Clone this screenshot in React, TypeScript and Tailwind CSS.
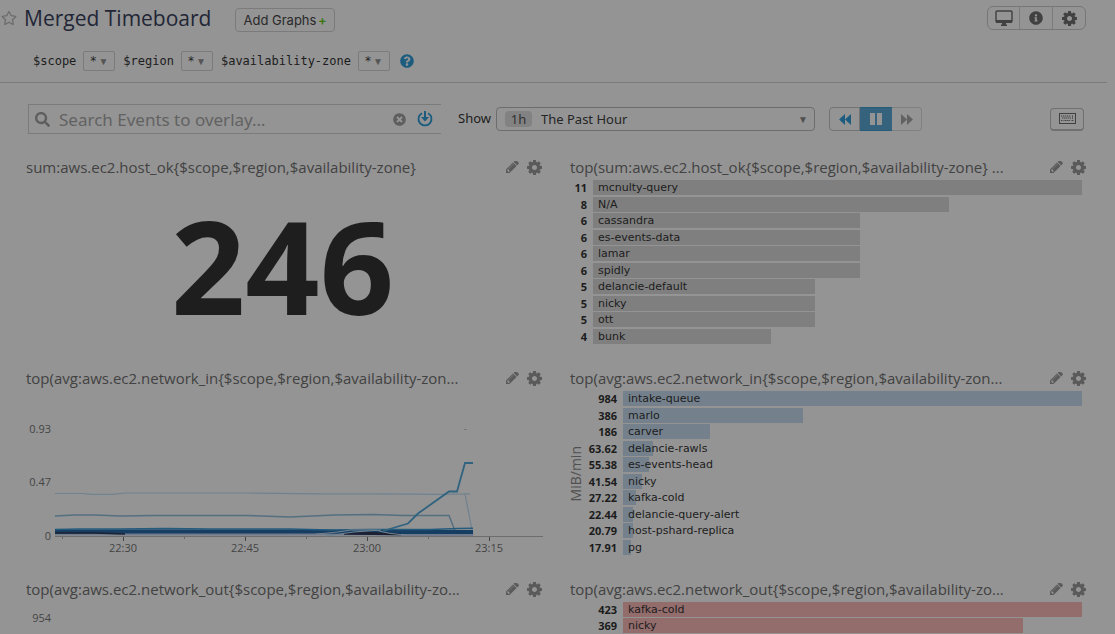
import type { ReactNode } from "react";
import { FaInfoCircle, FaQuestionCircle, FaRegStar, FaSearch, FaTimesCircle } from "react-icons/fa";

function CogIcon({ className }: { className: string }) {
  return (
    <svg viewBox="128 128 1536 1536" className={className} fill="currentColor" aria-hidden="true">
      <path d="M1152 896q0-106-75-181t-181-75-181 75-75 181 75 181 181 75 181-75 75-181zm512-109v222q0 12-8 23t-20 13l-185 28q-19 54-39 91 35 50 107 138 10 12 10 25t-9 23q-27 37-99 108t-94 71q-12 0-26-9l-138-108q-44 23-91 38-16 136-29 186-7 28-36 28h-222q-14 0-24.5-8.5t-11.5-21.5l-28-184q-49-16-90-37l-141 107q-10 9-25 9-14 0-25-11-126-114-165-168-7-10-7-23 0-12 8-23 15-21 51-66.5t54-70.5q-27-50-41-99l-183-27q-13-2-21-12.5t-8-23.5v-222q0-12 8-23t19-13l186-28q14-46 39-92-40-57-107-138-10-12-10-24 0-10 9-23 26-36 98.5-107.5t94.5-71.5q13 0 26 10l138 107q44-23 91-38 16-136 29-186 7-28 36-28h222q14 0 24.5 8.5t11.5 21.5l28 184q49 16 90 37l142-107q9-9 24-9 13 0 25 10 129 119 165 170 7 8 7 22 0 12-8 23-15 21-51 66.5t-54 70.5q26 50 41 98l183 28q13 2 21 12.5t8 23.5z" />
    </svg>
  );
}

function PencilIcon({ className }: { className: string }) {
  return (
    <svg viewBox="128 256 1536 1408" className={className} fill="currentColor" aria-hidden="true">
      <path d="M491 1536l91-91-235-235-91 91v107h128v128h107zm523-928q0-22-22-22-10 0-17 7l-542 542q-7 7-7 17 0 22 22 22 10 0 17-7l542-542q7-7 7-17zm-54-192l416 416-832 832h-416v-416zm683 96q0 53-37 90l-166 166-416-416 166-165q36-38 90-38 53 0 91 38l235 234q37 39 37 91z" />
    </svg>
  );
}

function MonitorIcon() {
  return (
    <svg viewBox="0 0 18 16" className="h-4 w-[18px]" aria-hidden="true">
      <rect x="1" y="1" width="16" height="11" rx="1" fill="none" stroke="currentColor" strokeWidth="1.4" />
      <path d="M1 10h16v3H1zM7 13h4v1.500h1V16H6v-1.500h1z" fill="currentColor" />
    </svg>
  );
}

function KeyboardIcon() {
  return (
    <svg viewBox="0 0 17 11" className="h-[11px] w-[17px]" aria-hidden="true">
      <rect x="0.500" y="0.500" width="16" height="10" fill="none" stroke="currentColor" />
      <path d="M2 3h10M13.500 2.500v3.500M3 5h9M2 7.500h2.500M5.500 7.500h6M12.500 7.500H15" stroke="currentColor" strokeWidth="1" strokeDasharray="1.400 0.600" fill="none" />
    </svg>
  );
}

function SkipIcon({ flip = false }: { flip?: boolean }) {
  return (
    <svg viewBox="0 0 12 11" className={flip ? "h-[11px] w-3 rotate-180" : "h-[11px] w-3"} fill="currentColor" aria-hidden="true">
      <path d="M0 0l6 5.500L0 11zM6 0l6 5.500L6 11z" />
    </svg>
  );
}

function OverlayIcon() {
  return (
    <svg viewBox="0 0 16 16" className="size-4" aria-hidden="true">
      <path d="M5 2.200A6.500 6.500 0 1 0 11 2.200" fill="none" stroke="currentColor" strokeWidth="1.800" />
      <path d="M7 0h2v6h3l-4 4.500L4 6h3z" fill="currentColor" />
    </svg>
  );
}

function Variable({ name }: { name: string }) {
  return (
    <div className="flex items-center gap-[7px]">
      <label htmlFor={name} className="font-['DejaVu_Sans_Mono',monospace] text-xs text-[#1c1c1c]">
        {name}
      </label>
      <div className="relative">
        <select
          id={name}
          className="block h-5 w-8 appearance-none rounded-xs border border-[#7b7b7b] pl-1.5 font-['DejaVu_Sans',sans-serif] text-xs leading-4 text-[#252525]"
        >
          <option>*</option>
        </select>
        <span aria-hidden="true" className="pointer-events-none absolute top-0.5 right-[7px] text-[10px] leading-4 text-[#555]">
          ▼
        </span>
      </div>
    </div>
  );
}

function Panel({ title, children }: { title: string; children: ReactNode }) {
  return (
    <section className="min-w-0">
      <header className="flex h-[25px] items-start justify-between">
        <h2 className="truncate text-[15px] leading-6 text-[#424242]">{title}</h2>
        <div className="flex h-6 items-center gap-2 pr-px text-[#5a5a5a]">
          <button aria-label="Edit graph">
            <PencilIcon className="h-3 w-[13px]" />
          </button>
          <button aria-label="Graph settings">
            <CogIcon className="size-[15px]" />
          </button>
        </div>
      </header>
      {children}
    </section>
  );
}

type Entry = [value: number, label: string];

const hosts: Entry[] = [
  [11, "mcnulty-query"],
  [8, "N/A"],
  [6, "cassandra"],
  [6, "es-events-data"],
  [6, "lamar"],
  [6, "spidly"],
  [5, "delancie-default"],
  [5, "nicky"],
  [5, "ott"],
  [4, "bunk"],
];

const networkIn: Entry[] = [
  [984, "intake-queue"],
  [386, "marlo"],
  [186, "carver"],
  [63.62, "delancie-rawls"],
  [55.38, "es-events-head"],
  [41.54, "nicky"],
  [27.22, "kafka-cold"],
  [22.44, "delancie-query-alert"],
  [20.79, "host-pshard-replica"],
  [17.91, "pg"],
];

const networkOut: Entry[] = [
  [423, "kafka-cold"],
  [369, "nicky"],
];

function TopList({ entries, color, unit }: { entries: Entry[]; color: string; unit?: string }) {
  const max = entries[0][0];
  const wide = max > 99;
  return (
    <div className="flex pr-[5px]">
      {wide && (
        <div className="flex w-3 shrink-0 items-center justify-center">
          {unit && <span className="rotate-180 text-sm leading-3 text-[#505050] [writing-mode:vertical-rl]">{unit}</span>}
        </div>
      )}
      <ol className={entries.length > 2 ? "flex h-[165px] min-w-0 grow flex-col" : "flex h-8 min-w-0 grow flex-col"}>
        {entries.map(([value, label], i) => (
          <li key={i} className="flex min-h-0 flex-1 items-start gap-1.5">
            <span className={wide ? "w-[35px] shrink-0 text-right text-[11px] leading-[15px] font-bold text-[#1c1c1c]" : "w-[17px] shrink-0 text-right text-[11px] leading-[15px] font-bold text-[#1c1c1c]"}>
              {value}
            </span>
            <div className="min-w-0 grow">
              <div className={`h-[15px] ${color}`} style={{ width: `${(value / max) * 100}%` }}>
                <span className="block pl-[5px] font-['DejaVu_Sans',sans-serif] text-[11px] leading-[15px] whitespace-nowrap text-[#1c1c1c]">{label}</span>
              </div>
            </div>
          </li>
        ))}
      </ol>
    </div>
  );
}

const ticks = [
  { x: 97, label: "22:30" },
  { x: 219, label: "22:45" },
  { x: 341, label: "23:00" },
  { x: 463, label: "23:15" },
];

function NetworkChart() {
  return (
    <svg viewBox="0 0 517 165" className="block w-full" fill="none" role="img" aria-label="Network in">
      <g fill="#444" fontSize="11" className="font-['Open_Sans',sans-serif]">
        <text x="25" y="42" textAnchor="end">0.93</text>
        <text x="25" y="95" textAnchor="end">0.47</text>
        <text x="25" y="149" textAnchor="end">0</text>
        {ticks.map((t) => (
          <text key={t.label} x={t.x} y="161" textAnchor="middle">{t.label}</text>
        ))}
      </g>
      <path d="M29 145.500H517" stroke="#6d6d6d" />
      <path d="M97.500 146v4M219.500 146v4M341.500 146v4M463.500 146v4" stroke="#444" />
      <path d="M36.500 146v2M158.500 146v2M280.500 146v2M402.500 146v2" stroke="#666" />
      <path d="M438 38.500h3" stroke="#777" />
      <path d="M29 102.500h27l10 .8h20l14-1.300h120l74 .8h60l60 .5 30-.5H439L447 144" stroke="#708290" strokeWidth="1.200" />
      <path d="M29 125l20-1h20l25 1 35-.5h90l45 1.500 45-2 38-.5 30 1h45H423l7 18" stroke="#547080" strokeWidth="1.500" />
      <path d="M29 143h330l20 .500h68" stroke="#717b8b" strokeWidth="3" />
      <path d="M29 140.500H290l40 .5h117" stroke="#163d62" strokeWidth="4" />
      <path d="M29 142h40l30 1M318 143l25-1.500 32 2z" stroke="#1b2033" strokeWidth="1.500" />
      <path d="M29 138.500l25-.5h40l45-.5 45 .5h80l40 1 40-.5h60l28-1 15-.3" stroke="#245b7d" strokeWidth="1.500" />
      <path d="M290 143q26-2 34-4h26q12 4 30 5" stroke="#75838e" strokeWidth="1.200" />
      <path d="M300 145q28-5 55-6" stroke="#6e8291" />
      <path d="M357 140l25-7.500 10-10 31-22h8l8-28.500h8" stroke="#2f6380" strokeWidth="1.800" />
    </svg>
  );
}

export default function App() {
  return (
    <div className="min-h-screen bg-[#949494] font-['Open_Sans',sans-serif] text-[#1c1c1c]">
      <header className="mr-2 border-b border-[#7b7b7b] pt-1 pr-[21px] pb-[11px]">
        <div className="flex h-7 items-center">
          <button aria-label="Star this board" className="mr-[7px] ml-px text-[#6d6d6d]">
            <FaRegStar className="size-4" />
          </button>
          <h1 className="text-[21px] leading-7 text-[#222636]">Merged Timeboard</h1>
          <button className="mt-1 ml-6 h-6 rounded-sm border border-[#7b7b7b] px-[7px] font-['Inter',sans-serif] text-[13px] leading-5 text-[#292929]">
            Add Graphs <span className="-ml-0.5 font-semibold text-[#3a770f]">+</span>
          </button>
          <div className="ml-auto flex h-6 divide-x divide-[#7b7b7b] rounded-md border border-[#777] text-[#414141]">
            <button aria-label="Full screen" className="flex w-8 items-center justify-center"><MonitorIcon /></button>
            <button aria-label="Information" className="flex w-[33px] items-center justify-center"><FaInfoCircle className="size-3.5" /></button>
            <button aria-label="Settings" className="flex w-8 items-center justify-center"><CogIcon className="size-[15px]" /></button>
          </div>
        </div>
        <div className="mt-[19px] flex h-5 items-center gap-2 pl-[33px]">
          <Variable name="$scope" />
          <Variable name="$region" />
          <Variable name="$availability-zone" />
          <button aria-label="Help" className="ml-0.5 text-[#1c5d7f]"><FaQuestionCircle className="size-3.5" /></button>
        </div>
      </header>

      <main className="pt-[21px] pr-7 pl-[26px]">
        <div className="flex h-[30px] items-center pl-0.5">
          <div className="flex h-[30px] w-[413px] items-center border-y border-l border-[#7b7b7b] pr-2 pl-1.5 text-[#5e5e5e]">
            <FaSearch className="size-[15px] shrink-0" />
            <input
              type="text"
              aria-label="Search Events"
              placeholder="Search Events to overlay…"
              className="ml-[9px] h-7 min-w-0 grow bg-transparent font-['Noto_Sans',sans-serif] text-[17px] placeholder:text-[#626262] placeholder:opacity-100"
            />
            <button aria-label="Clear search"><FaTimesCircle className="size-[13px]" /></button>
            <button aria-label="Overlay events" className="ml-[11px] text-[#1c5d7f]"><OverlayIcon /></button>
          </div>
          <label htmlFor="range" className="ml-[17px] w-[38px] font-['Noto_Sans',sans-serif] text-[13px]">Show</label>
          <div className="relative">
            <select id="range" className="block h-6 w-[319px] appearance-none rounded-sm border border-[#6d6d6d] pl-11 font-['Noto_Sans',sans-serif] text-[13px] leading-5 text-[#252525]">
              <option>The Past Hour</option>
            </select>
            <span className="pointer-events-none absolute top-1 left-[9px] h-4 w-[27px] rounded-sm bg-[#828282] text-center font-['Noto_Sans',sans-serif] text-[13px] leading-4 text-[#303030]">1h</span>
            <span aria-hidden="true" className="pointer-events-none absolute top-1 right-[7px] text-[10px] leading-4 text-[#505050]">▼</span>
          </div>
          <div className="ml-3.5 flex h-6">
            <button aria-label="Back" className="flex w-[31px] items-center justify-center rounded-l-sm border border-[#737373] text-[#1c5d7f]"><SkipIcon flip /></button>
            <button aria-label="Pause" className="flex w-8 items-center justify-center border-y border-[#245b79] bg-[#35637d] text-[#949494]">
              <svg viewBox="0 0 12 12" className="size-3" fill="currentColor" aria-hidden="true"><path d="M0 0h5v12H0zM7 0h5v12H7z" /></svg>
            </button>
            <button aria-label="Forward" className="flex w-[30px] items-center justify-center rounded-r-sm border border-l-0 border-[#808080] text-[#626262]"><SkipIcon /></button>
          </div>
          <button aria-label="Keyboard shortcuts" className="mr-[3px] ml-auto flex h-[23px] w-[34px] items-center justify-center rounded-sm border border-b-2 border-[#707070] text-[#404040]"><KeyboardIcon /></button>
        </div>

        <div className="mt-[21px] grid grid-cols-2 gap-x-[27px] gap-y-[21px]">
          <Panel title="sum:aws.ec2.host_ok{$scope,$region,$availability-zone}">
            <p className="pt-[5px] pr-1 text-center text-[130px] leading-40 font-bold text-[#1e1e1e]">246</p>
          </Panel>
          <Panel title="top(sum:aws.ec2.host_ok{$scope,$region,$availability-zone} ...">
            <TopList entries={hosts} color="bg-[#7f7f7f]" />
          </Panel>
          <Panel title="top(avg:aws.ec2.network_in{$scope,$region,$availability-zon...">
            <NetworkChart />
          </Panel>
          <Panel title="top(avg:aws.ec2.network_in{$scope,$region,$availability-zon...">
            <TopList entries={networkIn} color="bg-[#74818c]" unit="MiB/min" />
          </Panel>
          <Panel title="top(avg:aws.ec2.network_out{$scope,$region,$availability-zo...">
            <p className="w-[25px] pt-2 text-right text-[11px] leading-4 text-[#444]">954</p>
          </Panel>
          <Panel title="top(avg:aws.ec2.network_out{$scope,$region,$availability-zo...">
            <TopList entries={networkOut} color="bg-[#936c6c]" />
          </Panel>
        </div>
      </main>
    </div>
  );
}
